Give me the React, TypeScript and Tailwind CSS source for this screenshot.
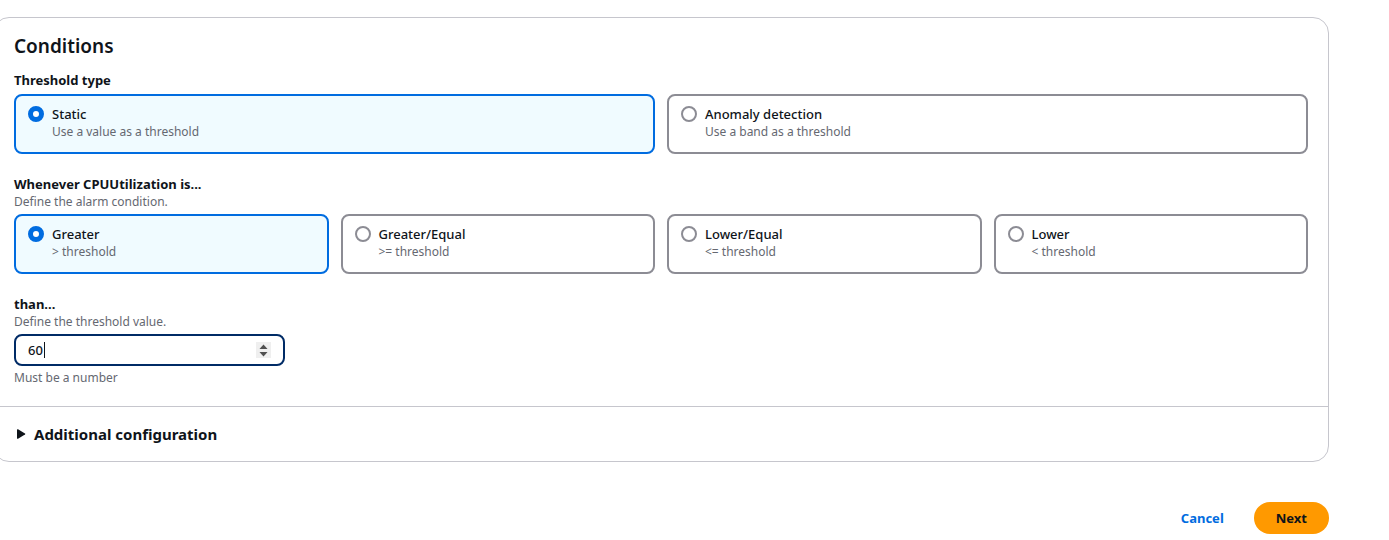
import { useState } from "react";

type Option = { value: string; label: string; description: string };

const thresholdTypes: Option[] = [
  { value: "static", label: "Static", description: "Use a value as a threshold" },
  { value: "anomaly", label: "Anomaly detection", description: "Use a band as a threshold" },
];

const operators: Option[] = [
  { value: "gt", label: "Greater", description: "> threshold" },
  { value: "gte", label: "Greater/Equal", description: ">= threshold" },
  { value: "lte", label: "Lower/Equal", description: "<= threshold" },
  { value: "lt", label: "Lower", description: "< threshold" },
];

function Tiles({
  name,
  options,
  value,
  onChange,
  columns,
}: {
  name: string;
  options: Option[];
  value: string;
  onChange: (value: string) => void;
  columns: string;
}) {
  return (
    <div className={`mt-1 grid gap-3 ${columns}`}>
      {options.map((option) => (
        <label
          key={option.value}
          className="flex cursor-pointer gap-2 rounded-lg border-2 border-[#8c8c94] bg-white px-3 pt-2 pb-3 has-checked:border-[#006ce0] has-checked:bg-[#f0fbff]"
        >
          <input
            type="radio"
            name={name}
            value={option.value}
            checked={value === option.value}
            onChange={() => onChange(option.value)}
            className="mt-0.5 h-4 w-4 shrink-0 appearance-none rounded-full border-2 border-[#8c8c94] bg-white outline-none checked:border-[5px] checked:border-[#006ce0]"
          />
          <span className="flex flex-col">
            <span className="text-[13px] leading-5 font-medium">{option.label}</span>
            <span className="text-xs leading-4 text-[#656871]">{option.description}</span>
          </span>
        </label>
      ))}
    </div>
  );
}

export default function App() {
  const [type, setType] = useState("static");
  const [operator, setOperator] = useState("gt");
  const [threshold, setThreshold] = useState("60");
  const step = (amount: number) => setThreshold(String(Number(threshold) + amount));

  return (
    <main className="-ml-[7px] pt-[17px] pr-[60px] font-['Noto_Sans',sans-serif] text-[13px] leading-5 text-[#0f141a]">
      <section className="rounded-2xl border border-[#c6c6cd] bg-white">
        <div className="px-5 pt-4 pb-5">
          <h2 className="text-[19px] leading-6 font-semibold">Conditions</h2>

          <fieldset className="mt-3">
            <legend className="font-bold">Threshold type</legend>
            <Tiles name="type" options={thresholdTypes} value={type} onChange={setType} columns="grid-cols-2" />
          </fieldset>

          <fieldset className="mt-5">
            <legend className="font-bold">Whenever CPUUtilization is...</legend>
            <p className="text-xs leading-4 text-[#656871]">Define the alarm condition.</p>
            <Tiles name="operator" options={operators} value={operator} onChange={setOperator} columns="grid-cols-4" />
          </fieldset>

          <div className="mt-5">
            <label htmlFor="threshold" className="block font-bold">
              than...
            </label>
            <p className="text-xs leading-4 text-[#656871]">Define the threshold value.</p>
            <div className="relative mt-1 w-[271px]">
              <input
                id="threshold"
                type="number"
                value={threshold}
                onChange={(event) => setThreshold(event.target.value)}
                className="block h-8 w-full appearance-none rounded-lg border-2 border-[#002b66] bg-white px-3 text-[13px] font-medium outline-none [&::-webkit-inner-spin-button]:appearance-none"
              />
              <span aria-hidden="true" className="absolute top-2 left-[30px] h-4 w-px bg-[#0f141a]" />
              <span className="absolute top-2 right-[14px] flex h-4 w-[15px] flex-col bg-[#efefef] text-[#505050]">
                <button type="button" aria-label="Increase" onClick={() => step(1)} className="h-2 w-full">
                  <svg viewBox="0 0 15 8" className="h-2 w-full" fill="currentColor" aria-hidden="true">
                    <path d="M7.5 2.5L11.5 7H3.5Z" />
                  </svg>
                </button>
                <button type="button" aria-label="Decrease" onClick={() => step(-1)} className="h-2 w-full">
                  <svg viewBox="0 0 15 8" className="h-2 w-full" fill="currentColor" aria-hidden="true">
                    <path d="M7.5 6.5L11.5 2H3.5Z" />
                  </svg>
                </button>
              </span>
            </div>
            <p className="mt-1 text-xs leading-4 text-[#656871]">Must be a number</p>
          </div>
        </div>

        <div className="border-t border-[#c6c6cd] px-5 py-[17px]">
          <button type="button" className="flex items-center gap-2 text-[15px] leading-5 font-bold">
            <svg viewBox="0 0 12 12" className="h-3 w-3" fill="currentColor" aria-hidden="true">
              <path d="M3 1.8Q3 0.8 4 1.3L11 5.4Q11.8 6 11 6.6L4 10.7Q3 11.2 3 10.2Z" />
            </svg>
            Additional configuration
          </button>
        </div>
      </section>

      <footer className="mt-10 flex items-center justify-end gap-2">
        <button type="button" className="h-8 rounded-full px-[22px] font-bold text-[#006ce0]">
          Cancel
        </button>
        <button type="button" className="h-8 rounded-full bg-[#ff9900] px-[22px] font-bold">
          Next
        </button>
      </footer>
    </main>
  );
}
